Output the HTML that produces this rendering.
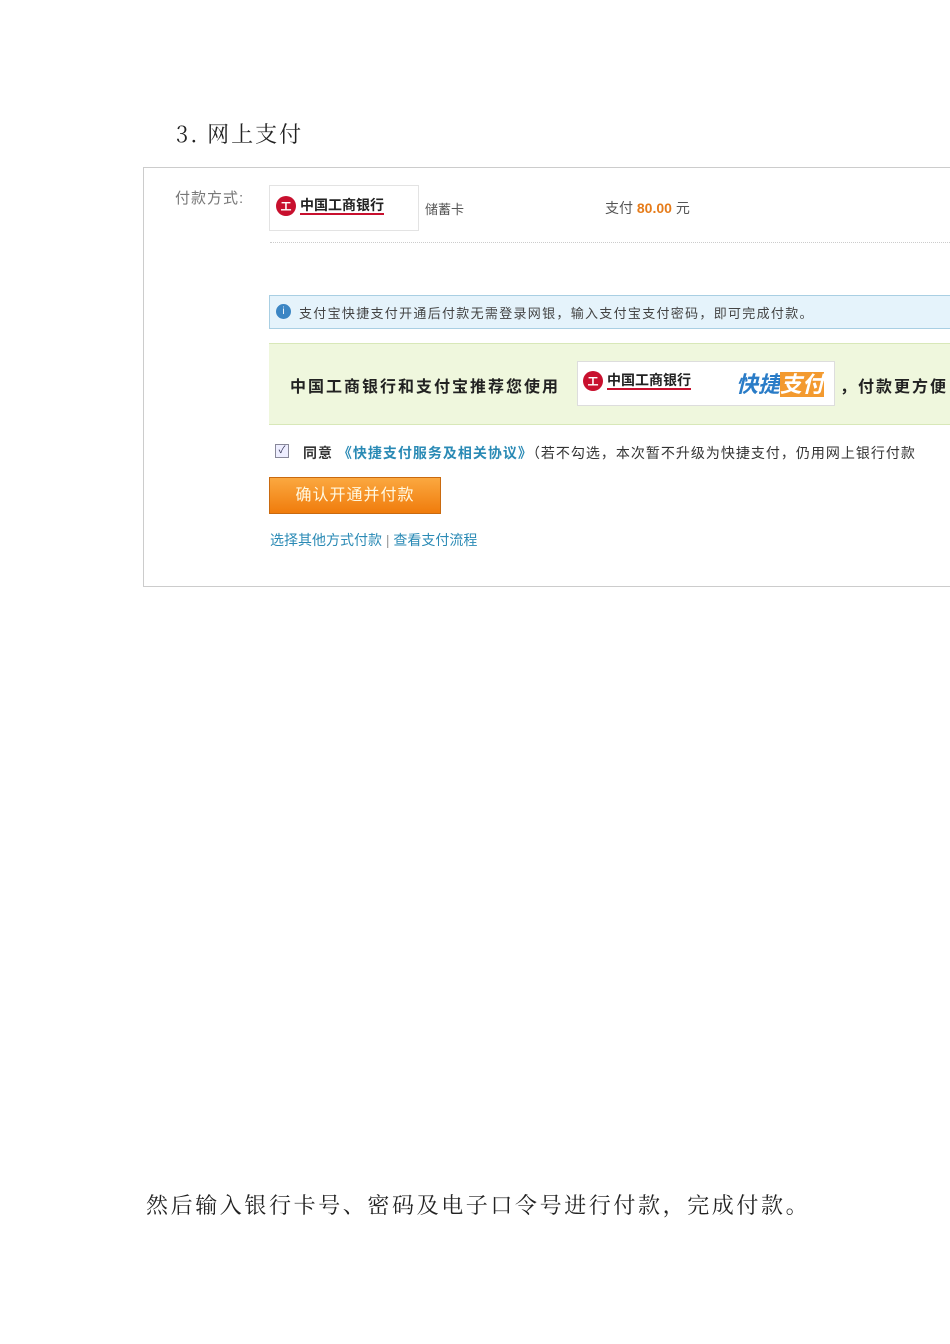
<!DOCTYPE html>
<html><head><meta charset="utf-8"><style>
body{margin:0;width:950px;height:1344px;background:#fff;position:relative;overflow:hidden;font-family:"Liberation Sans","Noto Sans CJK SC",sans-serif}
.a{position:absolute;white-space:nowrap}
.logo{position:absolute;display:flex;align-items:center;}
.ic{width:20px;height:20px;border-radius:50%;background:#c8102e;color:#fff;font-size:11px;display:flex;align-items:center;justify-content:center;font-weight:bold}
.bn{font-weight:bold;font-size:14px;color:#222;margin-left:4px;border-bottom:2px solid #c8102e;line-height:16px}
</style></head><body>
<div class="a" style="left:176px;top:118px;font-size:22px;color:#222;font-family:'Noto Serif CJK SC',serif;letter-spacing:2px">3. 网上支付</div>
<div class="a" style="left:143px;top:167px;width:820px;height:418px;border:1px solid #ccc;border-right:none"></div>
<div class="a" style="left:175px;top:187px;font-size:15px;color:#777;letter-spacing:1px">付款方式:</div>
<div class="a" style="left:269px;top:185px;width:148px;height:44px;border:1px solid #e3e3e3"></div>
<div class="logo" style="left:276px;top:196px"><div class="ic">工</div><div class="bn">中国工商银行</div></div>
<div class="a" style="left:425px;top:199px;font-size:13px;color:#555">储蓄卡</div>
<div class="a" style="left:605px;top:198px;font-size:14px;color:#555">支付 <b style="color:#e67c1a">80.00</b> 元</div>
<div class="a" style="left:270px;top:242px;width:680px;border-top:1px dotted #ccc"></div>
<div class="a" style="left:269px;top:295px;width:681px;height:32px;background:#e5f3fb;border:1px solid #a9cfe3"></div>
<div class="a" style="left:276px;top:304px;width:15px;height:15px;border-radius:50%;background:#3c86c4;color:#fff;font-size:10px;text-align:center;line-height:15px">i</div>
<div class="a" style="left:299px;top:303px;font-size:13px;color:#444;letter-spacing:1.3px">支付宝快捷支付开通后付款无需登录网银，输入支付宝支付密码，即可完成付款。</div>
<div class="a" style="left:269px;top:343px;width:681px;height:80px;background:#eff7dd;border-top:1px solid #d8e8b8;border-bottom:1px solid #d8e8b8"></div>
<div class="a" style="left:290px;top:373px;font-size:16px;color:#222;font-weight:bold;letter-spacing:2px">中国工商银行和支付宝推荐您使用</div>
<div class="a" style="left:577px;top:361px;width:256px;height:43px;background:#fff;border:1px solid #ddd"></div>
<div class="logo" style="left:583px;top:371px"><div class="ic">工</div><div class="bn">中国工商银行</div></div>
<div class="a" style="left:736px;top:367px;font-size:22px;font-style:italic;font-weight:bold;color:#2a7cc7">快捷<span style="background:#f39a2f;color:#fff">支付</span></div>
<div class="a" style="left:840px;top:373px;font-size:16px;color:#222;font-weight:bold;letter-spacing:2px">，付款更方便</div>
<div class="a" style="left:275px;top:444px;width:12px;height:12px;border:1px solid #889;background:#eef;font-size:10px;line-height:12px;text-align:center;color:#335">✓</div>
<div class="a" style="left:303px;top:443px;font-size:14px;color:#333;font-weight:bold;letter-spacing:1px">同意 <span style="color:#2a8ab5">《快捷支付服务及相关协议》</span><span style="font-weight:normal;color:#333">（若不勾选，本次暂不升级为快捷支付，仍用网上银行付款</span></div>
<div class="a" style="left:269px;top:477px;width:170px;height:35px;background:linear-gradient(#fba840,#f07c0c);border:1px solid #c96a10;color:#fff8e0;font-size:16px;line-height:35px;text-align:center;letter-spacing:1px">确认开通并付款</div>
<div class="a" style="left:270px;top:530px;font-size:14px;color:#2a8ab5">选择其他方式付款 <span style="color:#999">|</span> 查看支付流程</div>
<div class="a" style="left:146px;top:1189px;font-size:22px;color:#222;font-family:'Noto Serif CJK SC',serif;letter-spacing:2.6px">然后输入银行卡号、密码及电子口令号进行付款，完成付款。</div>
</body></html>
